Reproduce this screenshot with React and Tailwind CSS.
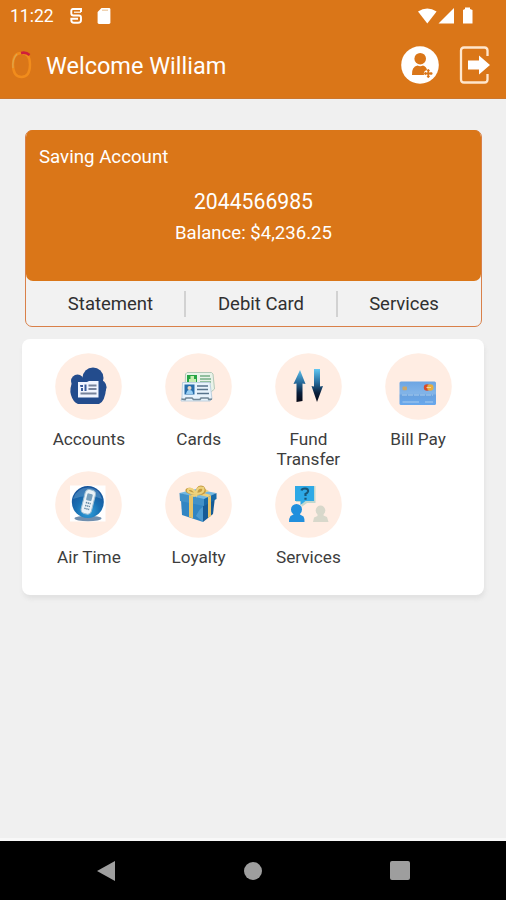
import React from "react";

function StatusBar() {
  return (
    <div className="flex h-8 items-center pl-[10px] pr-[32px] text-white">
      <span className="w-[59px] text-[17.5px] leading-5">11:22</span>
      <svg className="h-[18px] w-[14px]" viewBox="0 0 14 18" fill="none" stroke="currentColor">
        <path d="M12 5V2H4Q2.300 2 2.300 4V6.500Q2.300 8.500 4.500 8.500H10Q12 8.500 12 10.500V13Q12 15.800 9 15.800H5Q2.300 15.800 2.300 13V11.800H9" strokeWidth="1.900" />
        <path d="M5 5.200H12" strokeWidth="1.200" />
      </svg>
      <svg className="ml-[14px] h-[18px] w-[14px]" viewBox="0 0 14 18">
        <path d="M4.500 1H12Q13.400 1 13.400 2.400V15.600Q13.400 17 12 17H2Q.600 17 .600 15.600V5Z" fill="currentColor" />
        <path d="M6 2.500V4M8 2.500V4M10 2.500V4" stroke="#e0a766" strokeWidth="1" />
      </svg>
      <svg className="ml-auto h-[18px] w-[56px]" viewBox="0 0 56 18" fill="currentColor">
        <path d="M0 4.500Q9.300-1.500 18.600 4.500L9.300 16.500Z" />
        <path d="M20.500 16.500L36 1V16.500Z" />
        <path d="M45 3L47 2V.500H52V2L54.500 3V16.500H45Z" />
      </svg>
    </div>
  );
}

function Header() {
  return (
    <header className="h-[99px] shrink-0 border-b border-[#cc762d] bg-[#da7618] text-white">
      <StatusBar />
      <div className="flex h-[66px] items-center pl-[11px] pr-[14px]">
        <svg className="h-[30px] w-[22px]" viewBox="0 0 22 30" fill="none">
          <path d="M10.500 3C17.500 3 19 9 19 14.500S17.500 27 10.500 27S2 21 2 14.500S4 3 10.500 3Z" stroke="#f18c1c" strokeWidth="2.400" />
          <path d="M6 4Q1 9 2 18" stroke="#dda64c" strokeWidth="1.200" />
          <path d="M10 3Q15 1.800 18.500 5" stroke="#cf1f3a" strokeWidth="2.600" />
        </svg>
        <h1 className="ml-[13px] pt-[2px] text-[23.500px] leading-8">Welcome William</h1>
        <svg className="ml-auto h-[38px] w-[38px]" viewBox="0 0 38 38">
          <circle cx="19" cy="19" r="18.800" fill="white" />
          <circle cx="19.200" cy="12.700" r="5.800" fill="#da7618" />
          <path d="M11 29Q10.500 20.500 16.500 19.500Q19.300 21 22 19.500Q25.500 20.500 26 24Q22 25 23 29Z" fill="#da7618" />
          <path d="M27.300 23.500V31.500M23.300 27.500H31.300" stroke="#da7618" strokeWidth="1.800" />
          <path d="M25.500 25L27.300 23L29.100 25M25.500 30L27.300 32L29.100 30M25 25.700L23 27.500L25 29.300M29.600 25.700L31.600 27.500L29.600 29.300" fill="#da7618" />
        </svg>
        <svg className="ml-[20px] h-[38px] w-[33px]" viewBox="0 0 33 38" fill="none">
          <path d="M28.500 10V4.500Q28.500 1.500 25.500 1.500H5Q2 1.500 2 4.500V33.500Q2 36.500 5 36.500H25.500Q28.500 36.500 28.500 33.500V28" stroke="#ffe6cc" strokeWidth="2.300" />
          <path d="M9 14.500H20V9.500L31 19L20 28.500V23.500H9Z" fill="white" />
        </svg>
      </div>
    </header>
  );
}

function AccountCard() {
  return (
    <section className="ml-[25px] mr-[24px] mt-[31px] flex h-[197px] shrink-0 flex-col rounded-[7px] border-[1.500px] border-[#d98049] bg-[#f2f2f2]">
      <div className="-mt-px h-[151px] shrink-0 rounded-[7px] bg-[#da7618] text-white">
        <p className="pl-[13px] pt-[15px] text-[18.700px] leading-6">Saving Account</p>
        <p className="mt-[21px] text-center text-[21.200px] leading-6">2044566985</p>
        <p className="mt-[7px] text-center text-[18.600px] leading-6">Balance: $4,236.25</p>
      </div>
      <div className="flex flex-1 items-center text-center text-[18.500px] text-[#303030]">
        <span className="w-[158px] pl-[11px] pt-[3px]">Statement</span>
        <i className="h-[26px] w-[2px] bg-[#d2d2d2]" />
        <span className="w-[150px] pt-[3px]">Debit Card</span>
        <i className="h-[26px] w-[2px] bg-[#d2d2d2]" />
        <span className="flex-1 pr-[11px] pt-[3px]">Services</span>
      </div>
    </section>
  );
}

function AccountsIcon() {
  return (
    <>
      <g fill="#234c8d">
        <circle cx="22.500" cy="28" r="6.500" />
        <circle cx="38" cy="25" r="10.500" />
        <circle cx="44" cy="34" r="7.500" />
        <path d="M18 27Q14 36 16 42Q18 49 23 51H44Q50 49 51.300 34L46 26H25Z" />
      </g>
      <path d="M23 29H32L34 28H43.500V44.500H23Z" fill="#f1f5ff" />
      <path d="M25 32H28V34H25.500ZM29.500 31.500H31.500V38H29.500ZM26 35H28V38H26Z" fill="#385b99" />
      <path d="M33.500 32.500H41.500M33.500 36H41.500M25.500 40.500H41.500" stroke="#77839b" strokeWidth="2" />
    </>
  );
}

function CardsIcon() {
  return (
    <>
      <path d="M20.500 21L22 19.500H46.500L48 21L49.500 36L46 39H20Z" fill="#e9f3e9" stroke="#b5c9b8" />
      <path d="M22 22H32V31H22Z" fill="#25a444" />
      <path d="M25.500 23H29V26H31V29H24V26H25.500Z" fill="#c6edaf" />
      <path d="M35 23H45M35 26H46M35 29H46" stroke="#75ae85" strokeWidth="1.500" />
      <path d="M17.500 29.500H45L47 46L45 48H16L17 44Z" fill="#e8f3fc" stroke="#bdd0df" />
      <path d="M19.500 31.500H29.500V41.500H19.500Z" fill="#276dab" />
      <circle cx="24.500" cy="35" r="2" fill="#e9d5c2" />
      <path d="M21 41Q22 36.500 24.500 37Q28 37 28 41Z" fill="#9acff3" />
      <path d="M32 33H43M32 36.500H43M32 40.500H44" stroke="#57738c" strokeWidth="1.700" />
      <path d="M16.500 46L20 46.500L21 45H27L28.500 46.500H35L36 45H43L44 46.500L47 46" stroke="#718796" strokeWidth="1.700" fill="none" />
    </>
  );
}

function TransferIcon() {
  return (
    <>
      <defs>
        <linearGradient id="transfer" x1="0" y1="16" x2="0" y2="49" gradientUnits="userSpaceOnUse">
          <stop stopColor="#62c8f3" />
          <stop offset=".4" stopColor="#286c9d" />
          <stop offset=".72" stopColor="#0a203d" />
          <stop offset="1" stopColor="#070714" />
        </linearGradient>
      </defs>
      <path d="M25 17L30.500 31L27.500 30.500V48L21.500 49V30.500L18.500 31Z" fill="url(#transfer)" />
      <path d="M39 16H45V33.500L48 33L42 49L36.500 33L39 33.500Z" fill="url(#transfer)" />
    </>
  );
}

function BillIcon() {
  return (
    <>
      <defs>
        <linearGradient id="credit" x1="0" x2="0" y1="0" y2="1">
          <stop stopColor="#6ca5e3" />
          <stop offset=".5" stopColor="#82b4e8" />
          <stop offset=".6" stopColor="#68a1df" />
          <stop offset="1" stopColor="#68a8ed" />
        </linearGradient>
      </defs>
      <rect x="14.500" y="28.500" width="36.500" height="23.500" rx="1.500" fill="url(#credit)" />
      <rect x="17.500" y="33.500" width="4.500" height="3.800" rx="1" fill="#caa76b" />
      <circle cx="42" cy="34.500" r="3.200" fill="#d84a28" />
      <circle cx="45.300" cy="34.500" r="3.200" fill="#e8ae3d" />
      <path d="M41.500 34.500H46" stroke="#f1d2a2" strokeWidth="1" />
      <path d="M17 42H48" stroke="#94bfe9" strokeWidth="1.500" strokeDasharray="5 1" />
      <path d="M17.500 49H34M40 49H48" stroke="#a8ccef" strokeWidth="1" />
    </>
  );
}

function AirIcon() {
  return (
    <>
      <defs>
        <radialGradient id="sphere" cx=".5" cy=".8" r=".75">
          <stop stopColor="#32a4df" />
          <stop offset=".5" stopColor="#1970b3" />
          <stop offset="1" stopColor="#16539a" />
        </radialGradient>
      </defs>
      <rect x="15" y="14.500" width="35.500" height="36" fill="#fff" />
      <ellipse cx="33" cy="47.500" rx="13.500" ry="2.700" fill="#718fae" />
      <circle cx="32.800" cy="31" r="16" fill="url(#sphere)" />
      <path d="M18 28Q22 16 34 16.500Q44 17 47 28Q34 22 18 28Z" fill="#85bce3" opacity=".35" />
      <g transform="rotate(14 33 31)">
        <rect x="28" y="18.500" width="10.500" height="24.500" rx="4" fill="#eaf2f7" stroke="#9bbcd1" />
        <rect x="30.500" y="22.500" width="5.500" height="7" rx="1" fill="#78a0bd" />
        <path d="M31 32H36M31 35H36M31 38H36" stroke="#6085a0" strokeWidth="1.500" strokeDasharray="1.400 .6" />
      </g>
    </>
  );
}

function GiftIcon() {
  return (
    <>
      <path d="M16 29L38 34V51L17 44Z" fill="#3185c3" />
      <path d="M38 34L50 26L48 43L38 51Z" fill="#165b96" />
      <path d="M14.500 22L31 18L51 22L39 31Z" fill="#73b8e2" />
      <path d="M14.500 22L39 28V35L15 30Z" fill="#4191c8" />
      <path d="M39 28L51.500 22V28L39 35Z" fill="#1769a7" />
      <path d="M24 24L28 25V47.500L24 46ZM43 26L46 24.500V45L43 47Z" fill="#e5c36a" />
      <path d="M22 21L28 19L46 24L43 26ZM25 24L40 18L44 20L29 26Z" fill="#efcf79" />
      <path d="M31 24C20 24 18 18 23 17C28 15 31 22 31 24C29 15 37 12 40 17C43 22 38 25 31 24Z" fill="#c49b42" />
      <path d="M30 23Q20 21 24 18Q28 17 31 23Q32 15 38 17Q40 22 32 23" fill="none" stroke="#eed27c" strokeWidth="2.200" />
      <path d="M31 45Q35 37 38 36V51Z" fill="#75bce6" opacity=".4" />
    </>
  );
}

function ServicesIcon() {
  return (
    <>
      <path d="M21 16L40.500 15V32H32L26.500 36V31H21Z" fill="#c2d8ce" />
      <path d="M20 15H39V30H30.500L25.500 34V30H20Z" fill="#2ea9e6" />
      <path d="M26.500 19.500Q27 17.500 30 17.500Q33.500 17.500 33 20.500Q32.500 22 30.500 23V25M30.500 26.700V28.700" fill="none" stroke="#195576" strokeWidth="2.200" />
      <ellipse cx="21.500" cy="38.500" rx="5.500" ry="5.500" fill="#218fdd" />
      <path d="M18.500 41H25V43.500L28.500 45.500Q29.500 47 29.500 51H14Q14 47 15.500 45L18.500 43.500Z" fill="#218fdd" />
      <ellipse cx="45.500" cy="39.500" rx="4.800" ry="5" fill="#d8d8cb" />
      <path d="M42.500 42H48.500V44.500L52 46L53.500 51H38L39 46.500L42.500 45Z" fill="#d8d8cb" />
    </>
  );
}

const services = [
  ["Accounts", AccountsIcon],
  ["Cards", CardsIcon],
  ["Fund Transfer", TransferIcon],
  ["Bill Pay", BillIcon],
  ["Air Time", AirIcon],
  ["Loyalty", GiftIcon],
  ["Services", ServicesIcon],
];

function ServicesCard() {
  return (
    <section className="ml-[22px] mr-[22px] mt-[12px] grid h-[256px] shrink-0 grid-cols-4 content-start rounded-[8px] bg-white pl-[12px] pr-[11px] pt-[14px] shadow-[1px_4px_4px_#e2e2e2]">
      {services.map(([label, Icon]) => (
        <button className="flex h-[118px] flex-col items-center" key={label}>
          <svg className="h-[67px] w-[67px] shrink-0" viewBox="0 0 67 67">
            <circle cx="33.500" cy="33.500" r="33.300" fill="#ffede3" />
            <Icon />
          </svg>
          <span className="mt-[9px] w-[76px] text-center text-[17.200px] leading-[20px] text-[#3d3d3d]">{label}</span>
        </button>
      ))}
    </section>
  );
}

export default function App() {
  return (
    <main className="flex h-[900px] w-[506px] flex-col overflow-hidden bg-[#f0f0f0] font-[Roboto,sans-serif]">
      <Header />
      <AccountCard />
      <ServicesCard />
      <nav className="mt-auto flex h-[62px] items-center justify-between border-t-[3px] border-[#f8f8f8] bg-black px-[96px]">
        <svg className="h-[22px] w-[20px]" viewBox="0 0 20 22"><path d="M1 11L19 1V21Z" fill="#9e9e9e" /></svg>
        <span className="h-[18px] w-[18px] rounded-full bg-[#9e9e9e]" />
        <span className="h-[19px] w-[20px] rounded-[2px] bg-[#9e9e9e]" />
      </nav>
    </main>
  );
}
